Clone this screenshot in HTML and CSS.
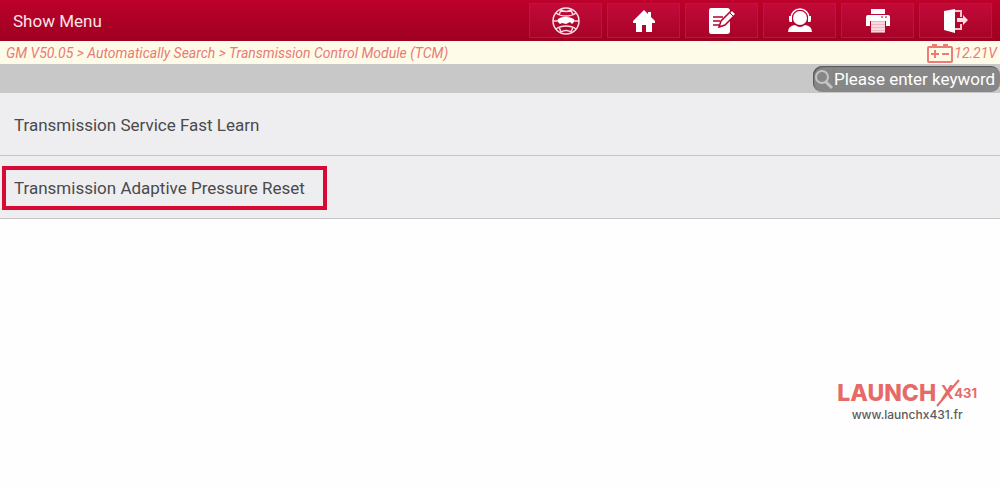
FILE: index.html
```
<!DOCTYPE html>
<html lang="en">
<head>
    <meta charset="UTF-8">
    <meta name="viewport" content="width=device-width, initial-scale=1.0">
    <title>Show Menu</title>
    <link rel="stylesheet" href="styles.css">
</head>
<body>
    <header class="topbar">
        <h1 class="title">Show Menu</h1>
        <nav class="toolbar">
            <button type="button" aria-label="Browser">
                <svg width="28" height="28" viewBox="0 0 28 28" fill="none" stroke="#fbdde3" stroke-width="1.5">
                    <circle cx="14" cy="14" r="13"/>
                    <path d="M4 6q4 3 10 3t10-3M4 22q4-3 10-3t10 3M9 3q5 3 10 0M9 25q5-3 10 0M9 3L7 8M19 3l2 5M9 25l-2-5M19 25l2-5M1 14h4M23 14h4"/>
                    <path d="M5 14c1-3 4-4 8-4 5 0 9 1 10 4l-3 3-2-2-4 2-4-1-2 1z" fill="#fff" stroke="none"/>
                </svg>
            </button>
            <button type="button" aria-label="Home">
                <svg width="22" height="24" viewBox="0 0 22 24" fill="#fff">
                    <path d="M11 1L0 12v2h3v9h6v-7h4v7h6v-9h3v-2l-4-4V3h-3v2z"/>
                </svg>
            </button>
            <button type="button" aria-label="Feedback">
                <svg width="28" height="28" viewBox="0 0 28 28">
                    <path d="M3 1h16q3 0 3 3v20q0 3-3 3H3q-2 0-2-3V4q0-3 2-3z" fill="#fff"/>
                    <path d="M5 10h10M5 14h7M5 18h6" stroke="#b8002c" stroke-width="1.5"/>
                    <path d="M11 20l2-6L24 3l4 4-11 11z" fill="#fff" stroke="#b8002c" stroke-width="1.5"/>
                    <path d="M21 5l4 4" stroke="#b8002c"/>
                </svg>
            </button>
            <button type="button" aria-label="Support">
                <svg width="26" height="26" viewBox="0 0 26 26">
                    <circle cx="13" cy="10" r="7" fill="#fff"/>
                    <path d="M4 10a9 9 0 0 1 18 0" fill="none" stroke="#fff" stroke-width="1.5"/>
                    <path d="M2 8h3v6H3q-1 0-1-2zM21 8h3v4q0 2-1 2h-2zM1 24q0-6 7-7 5 4 10 0 7 1 7 7z" fill="#fff"/>
                </svg>
            </button>
            <button type="button" aria-label="Print">
                <svg width="24" height="26" viewBox="0 0 24 26">
                    <path d="M5 1h14v5H5zM2 7h20q2 0 2 2v9h-4v-5H4v5H0V9q0-2 2-2z" fill="#fff"/>
                    <path d="M15 9h2M19 9h2" stroke="#b8002c"/>
                    <path d="M5 13h14v11H5z" fill="#f3b4c2"/>
                    <path d="M5 15h14M5 18h14M5 21h14M5 24h14" stroke="#fff"/>
                </svg>
            </button>
            <button type="button" aria-label="Exit">
                <svg width="26" height="26" viewBox="0 0 26 26">
                    <path d="M1 3l11-2v24L1 22z" fill="#fff"/>
                    <path d="M12 3h6v6M12 21h6v-5" fill="none" stroke="#f7c5d0" stroke-width="2"/>
                    <path d="M14 10h6V7l5 5-5 5v-3h-6z" fill="#fbdde3"/>
                </svg>
            </button>
        </nav>
    </header>

    <div class="status">
        <span>GM V50.05 &gt; Automatically Search &gt; Transmission Control Module (TCM)</span>
        <span class="battery">
            <svg width="26" height="20" viewBox="0 0 26 20" fill="none" stroke="#ee7b74" stroke-width="2">
                <path d="M2 4h22q1 0 1 1v13q0 1-1 1H2q-1 0-1-1V5q0-1 1-1zM5 2h5M16 2h5M4 11h8M8 7v8M15 11h7"/>
            </svg>
            <span>12.21V</span>
        </span>
    </div>

    <div class="search-bar">
        <label class="search">
            <svg width="18" height="22" viewBox="0 0 18 22" fill="none" stroke="#c4c4c4">
                <circle cx="7" cy="9" r="6" stroke-width="2"/>
                <path d="M11 14l6 6" stroke-width="3"/>
            </svg>
            <input type="text" placeholder="Please enter keyword" aria-label="Search">
        </label>
    </div>

    <ul class="menu">
        <li><a href="#">Transmission Service Fast Learn</a></li>
        <li><a href="#" class="selected">Transmission Adaptive Pressure Reset</a></li>
    </ul>

    <footer class="brand">
        <div class="logo">
            <span>LAUNCH</span>
            <span class="logo-x">X<svg width="24" height="28" viewBox="0 0 24 28"><path d="M1 27L23 1" stroke="#e66a68" stroke-width="2"/></svg></span>
            <span class="logo-num">431</span>
        </div>
        <div class="site">www.launchx431.fr</div>
    </footer>
</body>
</html>
```
FILE: styles.css
```
* {
    box-sizing: border-box;
}
body {
    margin: 0;
    min-height: 100vh;
    display: flex;
    flex-direction: column;
    background-color: #fefefe;
    font-family: Roboto, "Liberation Sans", sans-serif;
}
.topbar {
    display: flex;
    justify-content: space-between;
    align-items: center;
    height: 41px;
    padding: 0 8px 0 13px;
    background: linear-gradient(#bd002b, #9f0022);
}
.title {
    margin: 0;
    font-size: 17px;
    font-weight: 400;
    color: #fbe3e7;
}
.toolbar {
    display: flex;
    gap: 5px;
}
.toolbar button {
    display: flex;
    justify-content: center;
    align-items: center;
    width: 73px;
    height: 35px;
    padding: 0;
    border: 1px solid #b51a3c;
    background: linear-gradient(#c20a38, #a80329);
    cursor: pointer;
}
.status {
    display: flex;
    justify-content: space-between;
    align-items: center;
    height: 23px;
    padding: 0 3px 0 6px;
    background-color: #fffbe9;
    color: #e67c75;
    font-size: 14px;
    font-style: italic;
}
.battery {
    display: flex;
    align-items: center;
    gap: 1px;
}
.search-bar {
    display: flex;
    justify-content: flex-end;
    align-items: center;
    height: 29px;
    background-color: #c8c8c8;
}
.search {
    display: flex;
    align-items: center;
    width: 187px;
    height: 26px;
    padding-left: 2px;
    border-radius: 9px;
    background-color: #878787;
    box-shadow: inset 1px 1px 1px #555;
}
.search svg {
    flex: none;
}
.search input {
    flex: 1;
    min-width: 0;
    padding: 0;
    border: 0;
    border-left: 1px solid #3aa08a;
    outline: 0;
    background: none;
    color: #fff;
    font-family: inherit;
    font-size: 17px;
}
.search input::placeholder {
    color: #fff;
}
.menu {
    margin: 0;
    padding: 0;
    list-style: none;
}
.menu li {
    display: flex;
    align-items: center;
    height: 63px;
    padding: 2px 0 0 2px;
    border-bottom: 1px solid #c4c4c7;
    background-color: #eeeef0;
}
.menu a {
    padding: 7px 18px 7px 8px;
    border: 4px solid transparent;
    color: #4a4a4c;
    font-size: 17px;
    line-height: 22px;
    text-decoration: none;
}
.menu .selected {
    border-color: #d80a35;
}
.brand {
    margin-top: auto;
    align-self: flex-end;
    padding: 0 23px 66px 0;
    font-family: Inter, "Liberation Sans", sans-serif;
    text-align: center;
}
.logo {
    display: flex;
    align-items: center;
    color: #e66a68;
    font-size: 23px;
    font-weight: 800;
    line-height: 28px;
}
.logo-x {
    position: relative;
    width: 18px;
    padding-left: 4px;
    font-size: 18px;
    font-weight: 600;
}
.logo-x svg {
    position: absolute;
    top: 0;
    left: 0;
}
.logo-num {
    font-size: 13px;
    font-weight: 700;
}
.site {
    color: #5c5c5c;
    font-size: 12px;
    font-weight: 500;
    line-height: 16px;
}
```
